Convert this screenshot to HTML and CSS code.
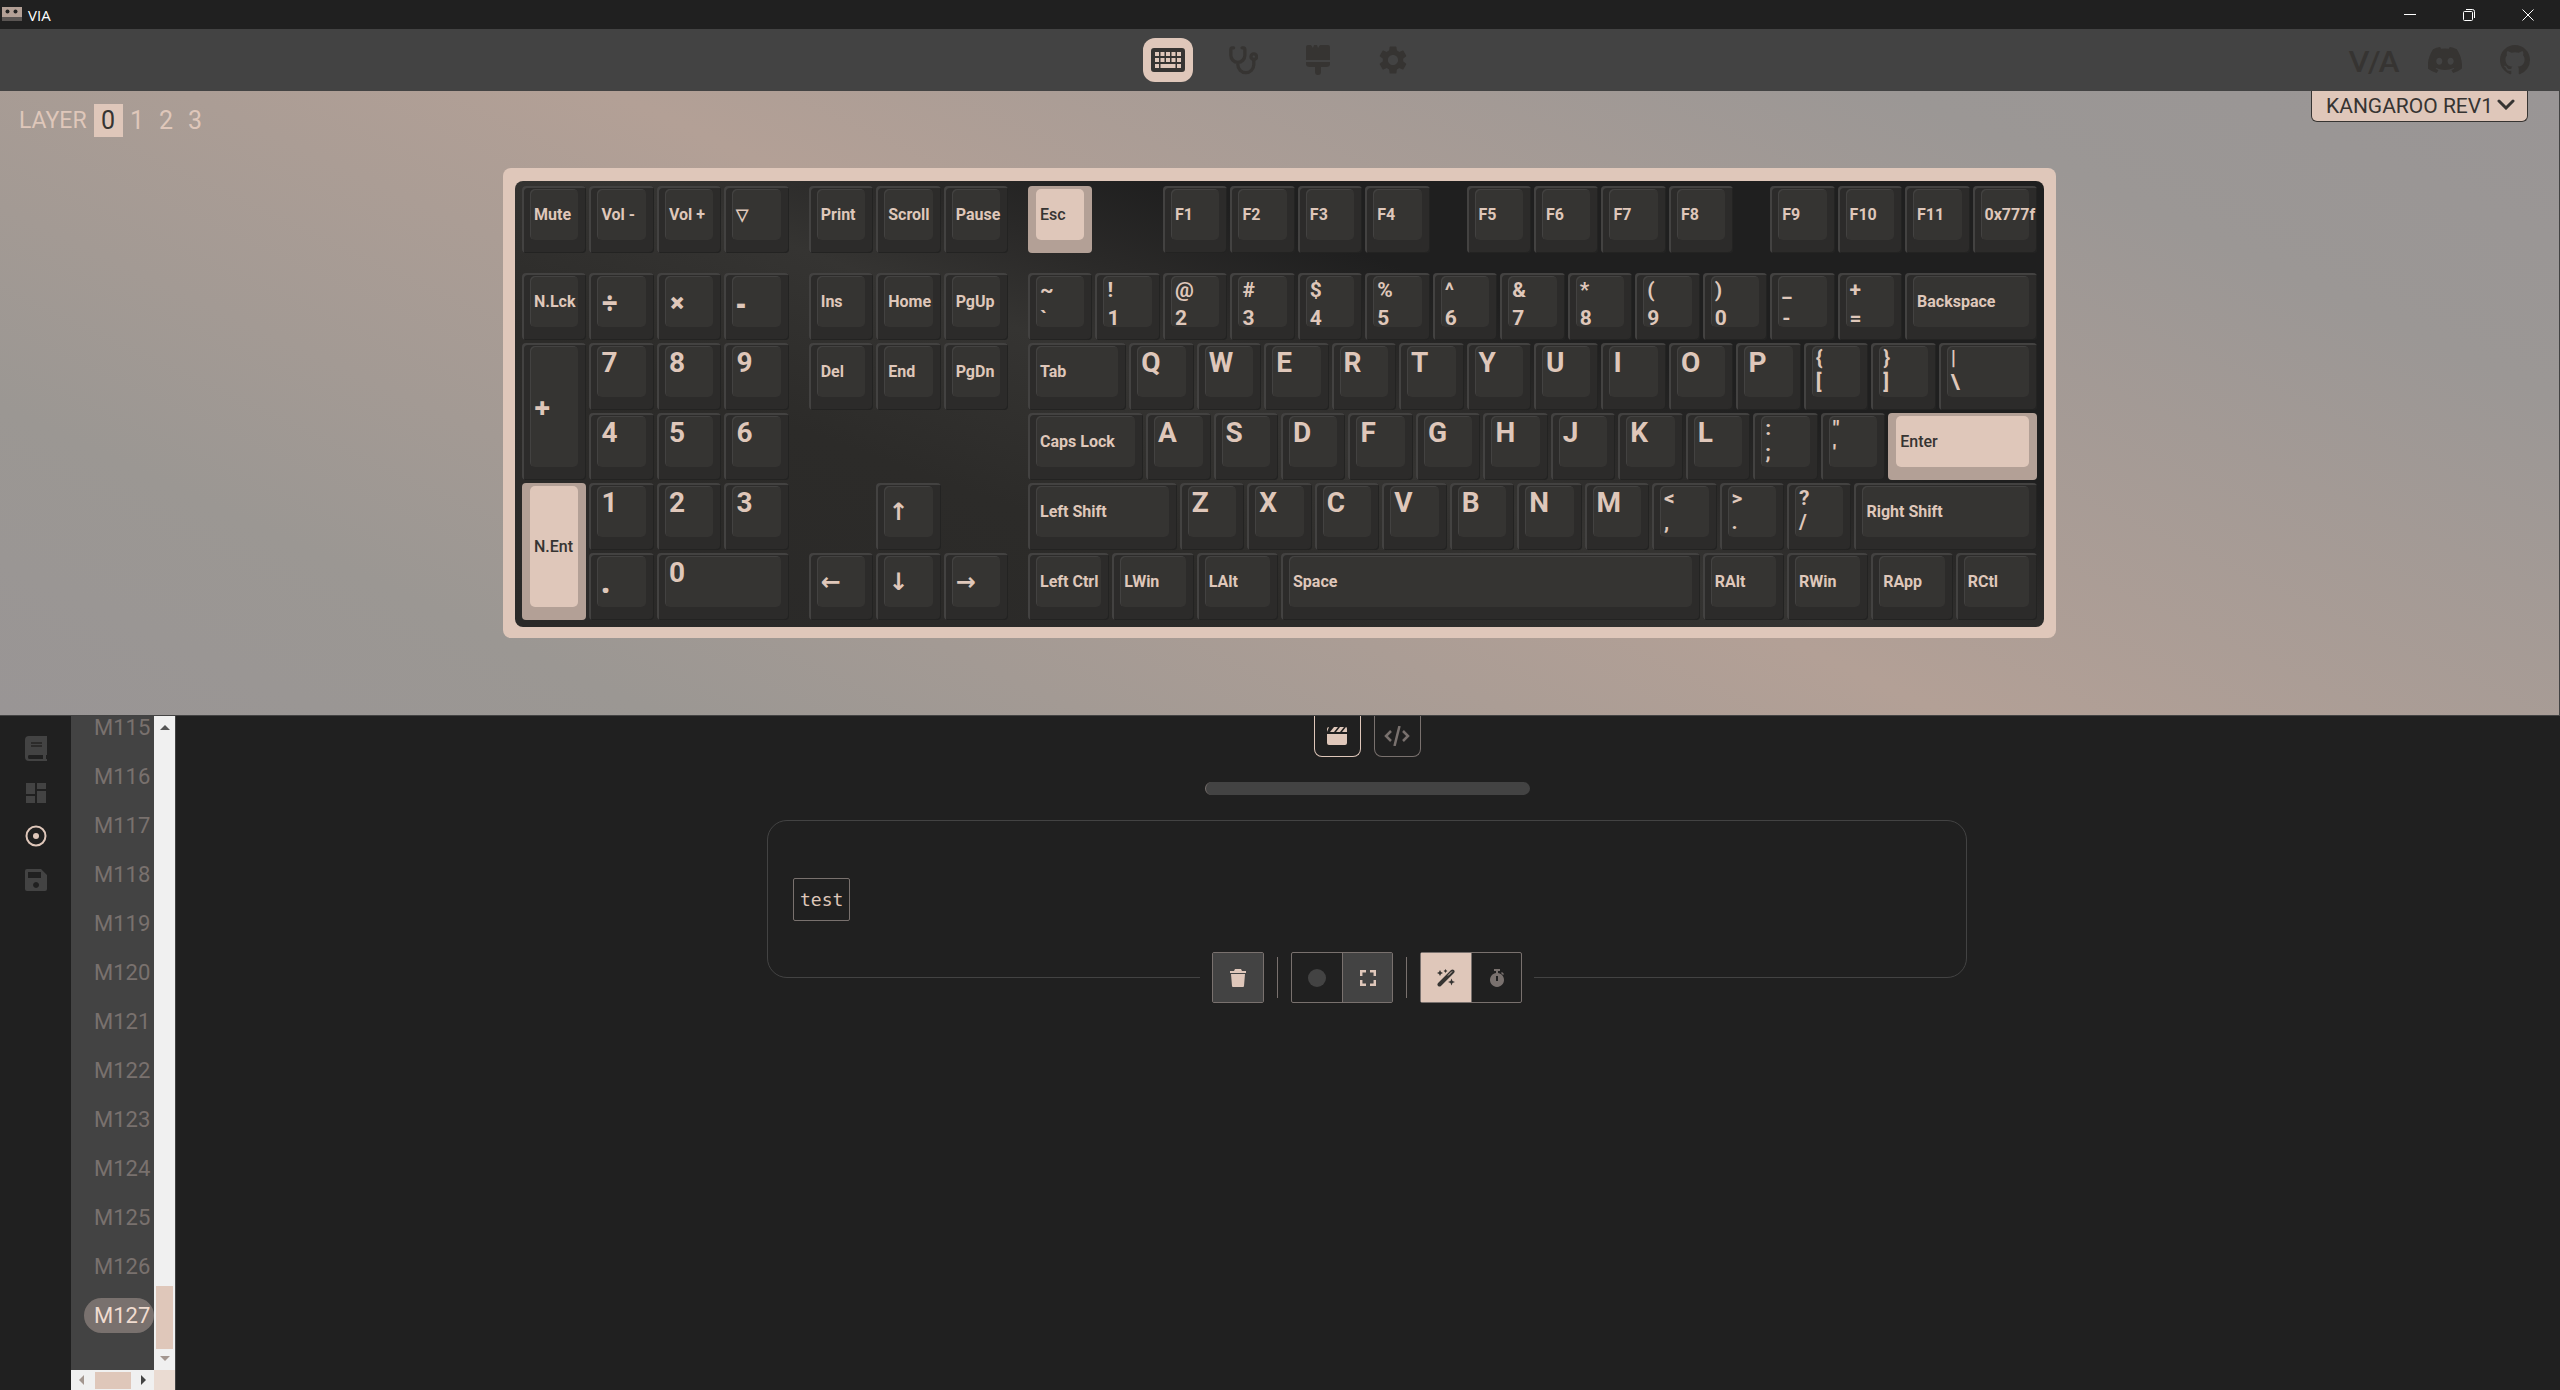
FILE: index.html
```html
<!DOCTYPE html>
<html lang="en">
<head>
	<meta charset="utf-8">
	<title>VIA</title>
	<link rel="stylesheet" href="styles.css">
</head>
<body>
	<header class="titlebar">
		<svg class="appicon" viewBox="0 0 20 14"><path fill="#b3a096" d="M0 0h20v10H0z"/><path fill="#5a5553" d="M0 10h20v4H0z"/><circle cx="5.500" cy="4.500" r="2" fill="#222"/><circle cx="13.500" cy="4.500" r="2" fill="#222"/></svg>
		<span>VIA</span>
		<div class="wincontrols">
			<button aria-label="Minimize"><svg viewBox="0 0 12 12"><path d="M0 5.500h12"/></svg></button>
			<button aria-label="Restore"><svg viewBox="0 0 12 12"><rect x=".5" y="2.500" width="9" height="9" rx="1"/><path d="M3 .5h6.500a2 2 0 0 1 2 2V9"/></svg></button>
			<button aria-label="Close"><svg viewBox="0 0 12 12"><path d="M.5.5l11 11M11.500.5l-11 11"/></svg></button>
		</div>
	</header>

	<nav class="topnav">
		<div class="side"></div>
		<div class="tabs">
			<a href="#" class="active" aria-label="Configure"><svg viewBox="0 0 34 24"><path fill="#363432" fill-rule="evenodd" d="M3 0h28a3 3 0 0 1 3 3v18a3 3 0 0 1-3 3H3a3 3 0 0 1-3-3V3a3 3 0 0 1 3-3zM4 4v4h4V4zm5.500 0v4h4V4zM15 4v4h4V4zm5.500 0v4h4V4zM26 4v4h4V4zM4 10v4h4v-4zm5.500 0v4h4v-4zM15 10v4h4v-4zm5.500 0v4h4v-4zM26 10v4h4v-4zM4 16v4h4v-4zm5.500 0v4h15v-4zM26 16v4h4v-4z"/></svg></a>
			<a href="#" aria-label="Test"><svg viewBox="0 0 32 32"><g fill="none" stroke="#363432" stroke-width="3.500" stroke-linecap="round"><path d="M6 3H4.500Q3 3 3 5v6a7.500 7.500 0 0 0 15 0V5q0-2-1.500-2H15M10.500 19v2a8.500 8.500 0 0 0 17 0v-6"/><circle cx="27.500" cy="12.500" r="3"/></g></svg></a>
			<a href="#" aria-label="Design"><svg viewBox="0 0 24 30"><path fill="#363432" d="M2 0h3l2 3 1-3h3l1 3 2-3h8q2 0 2 2v13H0V2q0-2 2-2zM0 17h24v2q0 3-4 3h-5v5q0 3-3 3t-3-3v-5H4q-4 0-4-3z"/></svg></a>
			<a href="#" aria-label="Settings"><svg class="gear" viewBox="0 0 24 24"><path fill="#363432" d="M19.140 12.940c.04-.3.06-.61.06-.94 0-.32-.02-.64-.07-.94l2.030-1.580c.18-.14.23-.41.12-.61l-1.920-3.320c-.12-.22-.37-.29-.59-.22l-2.390.96c-.5-.38-1.030-.7-1.620-.94l-.36-2.540c-.04-.24-.24-.41-.48-.41h-3.840c-.24 0-.43.17-.47.41l-.36 2.540c-.59.24-1.130.57-1.620.94l-2.390-.96c-.22-.08-.47 0-.59.22L2.740 8.870c-.12.21-.08.47.12.61l2.030 1.580c-.05.3-.09.63-.09.94s.02.64.07.94l-2.030 1.580c-.18.14-.23.41-.12.61l1.920 3.320c.12.22.37.29.59.22l2.390-.96c.5.38 1.030.7 1.620.94l.36 2.540c.05.24.24.41.48.41h3.840c.24 0 .44-.17.47-.41l.36-2.540c.59-.24 1.130-.56 1.620-.94l2.390.96c.22.08.47 0 .59-.22l1.920-3.320c.12-.22.07-.47-.12-.61l-2.010-1.580zM12 15.600c-1.980 0-3.600-1.620-3.600-3.600s1.620-3.600 3.600-3.600 3.600 1.620 3.600 3.600-1.620 3.600-3.600 3.600z"/></svg></a>
		</div>
		<div class="side links">
			<a href="#" class="logo">V/A</a>
			<a href="#" aria-label="Discord"><svg viewBox="28 32 584 448"><path fill="#363432" d="M524.531 69.836a1.500 1.500 0 0 0-.764-.7A485.065 485.065 0 0 0 404.081 32.030a1.816 1.816 0 0 0-1.923.91 337.461 337.461 0 0 0-14.900 30.600 447.848 447.848 0 0 0-134.426 0 309.541 309.541 0 0 0-15.135-30.600 1.890 1.890 0 0 0-1.924-.91A483.689 483.689 0 0 0 116.085 69.137a1.712 1.712 0 0 0-.788.676C39.068 183.651 18.186 294.690 28.430 404.354a2.016 2.016 0 0 0 .765 1.375A487.666 487.666 0 0 0 176.020 479.918a1.900 1.900 0 0 0 2.063-.676A348.200 348.200 0 0 0 208.120 430.400a1.860 1.860 0 0 0-1.019-2.588 321.173 321.173 0 0 1-45.868-21.853 1.885 1.885 0 0 1-.185-3.126c3.082-2.309 6.166-4.711 9.109-7.137a1.819 1.819 0 0 1 1.900-.256c96.229 43.917 200.410 43.917 295.500 0a1.812 1.812 0 0 1 1.924.233c2.944 2.426 6.027 4.851 9.132 7.160a1.884 1.884 0 0 1-.162 3.126 301.407 301.407 0 0 1-45.890 21.830 1.875 1.875 0 0 0-1 2.611 391.055 391.055 0 0 0 30.014 48.815 1.864 1.864 0 0 0 2.063.7A486.048 486.048 0 0 0 610.700 405.729a1.882 1.882 0 0 0 .765-1.352C623.729 277.594 590.933 167.465 524.531 69.836ZM222.491 337.580c-28.972 0-52.844-26.587-52.844-59.239S193.056 219.100 222.491 219.100c29.665 0 53.306 26.820 52.843 59.239C275.334 310.993 251.924 337.580 222.491 337.580Zm195.380 0c-28.971 0-52.843-26.587-52.843-59.239S388.437 219.100 417.871 219.100c29.667 0 53.307 26.820 52.844 59.239C470.715 310.993 447.538 337.580 417.871 337.580Z"/></svg></a>
			<a href="#" aria-label="GitHub"><svg class="github" viewBox="0 0 16 16"><path fill="#363432" d="M8 0C3.580 0 0 3.580 0 8c0 3.540 2.290 6.530 5.470 7.590.4.07.55-.17.55-.38 0-.19-.01-.82-.01-1.490-2.010.37-2.530-.49-2.690-.94-.09-.23-.48-.94-.82-1.130-.28-.15-.68-.52-.01-.53.63-.01 1.080.58 1.230.82.72 1.210 1.870.87 2.330.66.07-.52.28-.87.51-1.070-1.780-.2-3.640-.89-3.640-3.950 0-.87.31-1.590.82-2.150-.08-.2-.36-1.020.08-2.120 0 0 .67-.21 2.200.82.64-.18 1.320-.27 2-.27s1.360.09 2 .27c1.530-1.040 2.200-.82 2.200-.82.44 1.100.16 1.920.08 2.120.51.56.82 1.270.82 2.150 0 3.070-1.870 3.750-3.650 3.950.29.25.54.73.54 1.480 0 1.070-.01 1.930-.01 2.200 0 .21.15.46.55.38A8.010 8.010 0 0 0 16 8c0-4.420-3.580-8-8-8z"/></svg></a>
		</div>
	</nav>

	<section class="canvas">
		<div class="canvastop">
			<div class="layers">
				<span>LAYER</span>
				<button class="active">0</button>
				<button>1</button>
				<button>2</button>
				<button>3</button>
			</div>
			<div class="device">
				<select aria-label="Keyboard">
					<option>KANGAROO REV1</option>
				</select>
				<svg viewBox="0 0 18 11"><path d="M2 2l7 7 7-7" fill="none" stroke="#363432" stroke-width="3" stroke-linecap="round"/></svg>
			</div>
		</div>
		<div class="case">
			<div class="plate" id="keys"></div>
		</div>
	</section>

	<main class="pane">
		<nav class="rail">
			<a href="#" aria-label="Keymap"><svg viewBox="0 0 22 25"><path fill="#434343" fill-rule="evenodd" d="M4 0h18v19h-1v4h1v2H4q-4 0-4-4V4q0-4 4-4zM4 19q-1 0-1 2t1 2h14v-4z"/><path stroke="#2c2b2a" stroke-width="2" d="M6 7h11M6 10h11"/></svg></a>
			<a href="#" aria-label="Layouts"><svg class="small" viewBox="0 0 20 20"><path fill="#434343" d="M0 0h9v11H0zM11 0h9v6h-9zM11 8h9v12h-9zM0 13h9v7H0z"/></svg></a>
			<a href="#" aria-label="Macros"><svg viewBox="0 0 22 22"><circle cx="11" cy="11" r="9.500" fill="none" stroke="#dfc7ba" stroke-width="2"/><circle cx="11" cy="11" r="3" fill="#dfc7ba"/></svg></a>
			<a href="#" aria-label="Save and load"><svg viewBox="0 0 22 22"><path fill="#434343" fill-rule="evenodd" d="M2 0h14l6 6v14q0 2-2 2H2q-2 0-2-2V2q0-2 2-2zM3 3v6h13V3zM11 13a3 3 0 1 0 .1 0z"/></svg></a>
		</nav>
		<div class="macros">
			<div class="list" id="macros"></div>
			<div class="vscroll">
				<svg viewBox="0 0 10 5"><path fill="#555" d="M5 0l5 5H0z"/></svg>
				<div class="vthumb"></div>
				<svg viewBox="0 0 10 5"><path fill="#a3968f" d="M5 5l5-5H0z"/></svg>
			</div>
			<div class="hscroll">
				<svg viewBox="0 0 5 10"><path fill="#a3968f" d="M0 5l5-5v10z"/></svg>
				<div class="hthumb"></div>
				<svg viewBox="0 0 5 10"><path fill="#444" d="M5 5L0 0v10z"/></svg>
			</div>
			<div class="corner"></div>
		</div>
		<div class="editor">
			<div class="modes">
				<button class="active" aria-label="Record"><svg viewBox="0 0 20 18"><path fill="#dfc7ba" d="M0 7h20v9q0 2-2 2H2q-2 0-2-2zM0 5V2q0-2 2-2zM3 5l4-5h4L7 5zM9 5l4-5h4l-4 5zM15 5l4-5q1 0 1 2v3z"/></svg></button>
				<button aria-label="Script"><svg class="code" viewBox="0 0 26 20"><path fill="none" stroke="#79716e" stroke-width="2.500" d="M7 5l-5 5 5 5M19 5l5 5-5 5M15.500 0l-5 20"/></svg></button>
			</div>
			<div class="progress"></div>
			<div class="sequence">
				<span class="chip">test</span>
			</div>
			<div class="tools">
				<div class="group">
					<button class="on" aria-label="Delete macro"><svg viewBox="0 0 16 18"><path fill="#dfc7ba" d="M0 2h4l1-2h6l1 2h4v2H0zM1 5h14l-1 12q0 1-1 1H3q-1 0-1-1z"/></svg></button>
				</div>
				<i class="sep"></i>
				<div class="group">
					<button aria-label="Record"><svg viewBox="0 0 18 18"><circle cx="9" cy="9" r="9" fill="#434343"/></svg></button>
					<button class="on" aria-label="Fullscreen"><svg class="full" viewBox="0 0 16 16"><path fill="none" stroke="#dfc7ba" stroke-width="2.500" d="M1.200 6V1.200H6M10 1.200h4.800V6M14.800 10v4.800H10M6 14.800H1.200V10"/></svg></button>
				</div>
				<i class="sep"></i>
				<div class="group">
					<button class="picked" aria-label="Smart optimize"><svg viewBox="0 0 18 18"><path stroke="#363432" stroke-width="4" stroke-linecap="round" d="M2.500 15.500l13-13"/><path stroke="#dfc7ba" d="M11 6.500l4-4"/><path fill="#363432" d="M3 1l1 2 2 1-2 1-1 2-1-2-2-1 2-1zM8.500 0l.7 1.300 1.300.7-1.300.7L8.500 4l-.7-1.300L6.500 2l1.300-.7zM14.500 9.500l1 2.500 2.500 1-2.500 1-1 2.500-1-2.500-2.500-1 2.500-1z"/></svg></button>
					<button aria-label="Record delays"><svg viewBox="0 0 16 18"><path fill="#79716e" fill-rule="evenodd" d="M5 0h6v2H9v2a7 7 0 1 1-2 0V2H5zM7 7v5h2V7zM13 3l2 2-1 1-2-2z"/></svg></button>
				</div>
			</div>
		</div>
	</main>

	<script src="script.js"></script>
</body>
</html>
```

FILE: styles.css
```css
*{
	box-sizing: border-box;
}
body{
	background-color: #202020;
	color: #dfc7ba;
	display: flex;
	flex-direction: column;
	font-family: Roboto, sans-serif;
	height: 100vh;
	margin: 0;
	overflow: hidden;
}
button,
select{
	background: none;
	border: none;
	color: inherit;
	font-family: inherit;
	margin: 0;
	padding: 0;
}
svg{
	display: block;
}

/* window title */
.titlebar{
	align-items: center;
	color: #fff;
	display: flex;
	flex: none;
	font-family: "Open Sans", sans-serif;
	font-size: 15px;
	gap: 6px;
	height: 29px;
	padding: 0 3px 0 2px;
}
.appicon{
	height: 14px;
	margin-bottom: 2px;
	width: 20px;
}
.wincontrols{
	display: flex;
	margin-left: auto;
}
.wincontrols button{
	display: flex;
	justify-content: center;
	width: 59px;
}
.wincontrols svg{
	fill: none;
	height: 12px;
	stroke: #fff;
	width: 12px;
}

/* top navigation */
.topnav{
	align-items: center;
	background-color: #434343;
	display: flex;
	flex: none;
	height: 62px;
}
.side{
	flex: 1;
	padding: 0 30px;
}
.tabs{
	display: flex;
	gap: 25px;
}
.tabs a{
	align-items: center;
	border-radius: 12px;
	display: flex;
	height: 44px;
	justify-content: center;
	width: 50px;
}
.tabs a.active{
	background-color: #dfc7ba;
}
.tabs svg{
	height: 30px;
}
.tabs .active svg{
	height: 24px;
}
.tabs .gear{
	height: 34px;
}
.links{
	align-items: center;
	display: flex;
	gap: 29px;
	justify-content: flex-end;
}
.links svg{
	height: 26px;
}
.links .github{
	height: 30px;
	margin-left: 9px;
}
.logo{
	color: #363432;
	font-family: Lato, sans-serif;
	font-size: 29px;
	font-weight: bold;
	text-decoration: none;
}

/* keyboard canvas */
.canvas{
	background: linear-gradient(25deg, #999595 0%, #9b9793 17%, #b3a096 50%, #9b9795 83%, #999595 100%);
	border-bottom: 1px solid #434343;
	border-right: 1px solid #434343;
	flex: none;
	padding-bottom: 77px;
}
.canvastop{
	align-items: flex-start;
	display: flex;
	height: 77px;
	justify-content: space-between;
	padding: 0 31px 0 19px;
}
.layers{
	align-items: center;
	display: flex;
	font-size: 23px;
	margin-top: 13px;
}
.layers span{
	margin-right: 7px;
}
.layers button{
	font-size: 25px;
	height: 33px;
	width: 29px;
}
.layers .active{
	background-color: #dfc7ba;
	color: #363432;
}
.device{
	position: relative;
}
.device select{
	-webkit-appearance: none;
	background-color: #dfc7ba;
	border: 1px solid #363432;
	border-radius: 0 0 6px 6px;
	border-top: none;
	color: #363432;
	font-size: 21px;
	height: 31px;
	padding-left: 14px;
	width: 217px;
}
.device svg{
	height: 11px;
	pointer-events: none;
	position: absolute;
	right: 13px;
	top: 8px;
	width: 18px;
}
.case{
	background-color: #dfc7ba;
	border-radius: 8px;
	margin: 0 auto;
	max-width: 1553px;
	padding: 13px 12px 11px;
	width: 94%;
}
.plate{
	background: linear-gradient(20deg, #2a2928 0%, #2c2b29 30%, #353432 48%, #2a2928 58%, #1f1f1f 68%);
	border-radius: 8px;
	display: grid;
	grid-template-columns: repeat(90, 1fr);
	grid-template-rows: 70px 17px repeat(5, 70px);
	padding: 5px 4px 4px 7px;
}
.key{
	background-color: #2c2b2a;
	border-radius: 4px;
	box-shadow: inset 2px 2px 0 #434241, inset -1px -1px 0 #232322;
	color: #dfc7ba;
	display: flex;
	margin: 0 3px 3px 0;
	min-width: 0;
	padding: 3px 8px 13px;
}
.cap{
	background-color: #353432;
	border-radius: 5px;
	box-shadow: inset 1px 1px 0 #434241;
	display: flex;
	flex: 1;
	flex-direction: column;
	font-size: 16px;
	font-weight: bold;
	height: 100%;
	justify-content: center;
	line-height: 22px;
	min-width: 0;
	padding-left: 4px;
	text-align: left;
	white-space: nowrap;
}
.accent{
	background-color: #b3a096;
	box-shadow: none;
	color: #363432;
}
.accent .cap{
	background-color: #dfc7ba;
	box-shadow: none;
	font-weight: 500;
}
.alpha .cap{
	font-size: 28px;
	justify-content: flex-start;
	line-height: 34px;
}
.pad .cap{
	font-family: "Open Sans", sans-serif;
	font-size: 28px;
	font-weight: 800;
}
.arrow .cap{
	font-family: "DejaVu Sans", sans-serif;
	font-size: 24px;
}
.double .cap{
	font-size: 21px;
	justify-content: flex-start;
	line-height: 28px;
}
.punct .cap{
	font-size: 21px;
	justify-content: flex-start;
	line-height: 24px;
}

/* bottom pane */
.pane{
	display: flex;
	flex: 1;
	min-height: 0;
}
.rail{
	align-items: center;
	display: flex;
	flex-direction: column;
	gap: 22px;
	padding-top: 20px;
	width: 71px;
}
.rail svg{
	width: 22px;
}
.rail .small{
	width: 20px;
}
.macros{
	background-color: #434343;
	border-right: 1px solid #434343;
	display: grid;
	grid-template-columns: 83px 21px;
	grid-template-rows: 1fr 20px;
	min-height: 0;
}
.list{
	display: flex;
	flex-direction: column;
	gap: 14px;
	justify-content: flex-end;
	min-height: 0;
	overflow: hidden;
	padding: 0 0 37px 13px;
}
.list button{
	border-radius: 18px;
	color: #79716e;
	flex: none;
	font-size: 22px;
	height: 35px;
	padding-left: 10px;
	text-align: left;
	width: 70px;
}
.list .active{
	background-color: #79716e;
	color: #f0dcd0;
}
.vscroll,
.hscroll{
	align-items: center;
	background-color: #f0f0f0;
	display: flex;
}
.vscroll{
	flex-direction: column;
	padding: 9px 0;
}
.vscroll svg{
	width: 10px;
}
.vthumb{
	background-color: #dfc7ba;
	height: 63px;
	margin: auto 0 7px;
	width: 17px;
}
.hscroll{
	justify-content: space-between;
	padding: 0 8px;
}
.hscroll svg{
	height: 10px;
}
.hthumb{
	background-color: #dfc7ba;
	height: 17px;
	width: 36px;
}
.corner{
	background-color: #eadbd2;
}

/* macro editor */
.editor{
	align-items: center;
	display: flex;
	flex: 1;
	flex-direction: column;
	padding-right: 2px;
}
.modes{
	display: flex;
	gap: 13px;
}
.modes button{
	align-items: center;
	border: 1px solid #79716e;
	border-radius: 0 0 8px 8px;
	border-top: none;
	display: flex;
	height: 41px;
	justify-content: center;
	width: 47px;
}
.modes .active{
	border-color: #dfc7ba;
}
.modes svg{
	height: 18px;
}
.modes .code{
	height: 20px;
}
.progress{
	background-color: #434343;
	border-left: 1px solid #79716e;
	border-radius: 7px;
	height: 13px;
	margin: 25px 0;
	width: 325px;
}
.sequence{
	align-items: center;
	border: 1px solid #434343;
	border-radius: 20px;
	display: flex;
	height: 158px;
	max-width: 1200px;
	padding: 0 25px;
	width: 94%;
}
.chip{
	border: 1px solid #79716e;
	border-radius: 2px;
	font-family: "DejaVu Sans Mono", monospace;
	font-size: 18px;
	line-height: 41px;
	padding: 0 6px;
}
.tools{
	align-items: center;
	background-color: #202020;
	display: flex;
	gap: 13px;
	margin-top: -26px;
	padding: 0 12px;
}
.group{
	border: 1px solid #79716e;
	border-radius: 2px;
	display: flex;
}
.group button{
	align-items: center;
	display: flex;
	height: 49px;
	justify-content: center;
	width: 50px;
}
.group button + button{
	border-left: 1px solid #79716e;
}
.group svg{
	height: 18px;
}
.group .full{
	height: 16px;
}
.group .on{
	background-color: #434343;
}
.group .picked{
	background-color: #dfc7ba;
}
.sep{
	background-color: #79716e;
	height: 41px;
	width: 1px;
}
```

FILE: script.js
```js
// every key: label, grid row, x in key units, width, style, height in rows
// "\n" in a label splits the shifted and the plain legend
var keys = [
	['Mute', 1, 0], ['Vol -', 1, 1], ['Vol +', 1, 2], ['▽', 1, 3],
	['Print', 1, 4.25], ['Scroll', 1, 5.25], ['Pause', 1, 6.25],
	['Esc', 1, 7.5, 1, 'accent'],
	['F1', 1, 9.5], ['F2', 1, 10.5], ['F3', 1, 11.5], ['F4', 1, 12.5],
	['F5', 1, 14], ['F6', 1, 15], ['F7', 1, 16], ['F8', 1, 17],
	['F9', 1, 18.5], ['F10', 1, 19.5], ['F11', 1, 20.5], ['0x777f', 1, 21.5],

	['N.Lck', 3, 0], ['÷', 3, 1, 1, 'pad'], ['×', 3, 2, 1, 'pad'], ['-', 3, 3, 1, 'pad'],
	['Ins', 3, 4.25], ['Home', 3, 5.25], ['PgUp', 3, 6.25],
	['Backspace', 3, 20.5, 2],

	['+', 4, 0, 1, 'pad', 2],
	['Del', 4, 4.25], ['End', 4, 5.25], ['PgDn', 4, 6.25],
	['Tab', 4, 7.5, 1.5],
	['{\n[', 4, 19, 1, 'punct'], ['}\n]', 4, 20, 1, 'punct'], ['|\n\\', 4, 21, 1.5, 'punct'],

	['Caps Lock', 5, 7.5, 1.75],
	[':\n;', 5, 18.25, 1, 'punct'], ['"\n\'', 5, 19.25, 1, 'punct'],
	['Enter', 5, 20.25, 2.25, 'accent'],

	['N.Ent', 6, 0, 1, 'accent', 2],
	['↑', 6, 5.25, 1, 'arrow'],
	['Left Shift', 6, 7.5, 2.25],
	['<\n,', 6, 16.75, 1, 'punct'], ['>\n.', 6, 17.75, 1, 'punct'], ['?\n/', 6, 18.75, 1, 'punct'],
	['Right Shift', 6, 19.75, 2.75],

	['.', 7, 1, 1, 'pad'], ['0', 7, 2, 2, 'alpha'],
	['←', 7, 4.25, 1, 'arrow'], ['↓', 7, 5.25, 1, 'arrow'], ['→', 7, 6.25, 1, 'arrow'],
	['Left Ctrl', 7, 7.5, 1.25], ['LWin', 7, 8.75, 1.25], ['LAlt', 7, 10, 1.25],
	['Space', 7, 11.25, 6.25],
	['RAlt', 7, 17.5, 1.25], ['RWin', 7, 18.75, 1.25], ['RApp', 7, 20, 1.25], ['RCtl', 7, 21.25, 1.25]
];

function addRun(legends, row, x, style){
	for (var i = 0; i < legends.length; i++) {
		keys.push([legends[i], row, x + i, 1, style]);
	}
}
addRun(['~\n`', '!\n1', '@\n2', '#\n3', '$\n4', '%\n5', '^\n6', '&\n7', '*\n8', '(\n9', ')\n0', '_\n-', '+\n='], 3, 7.5, 'double');
addRun('789'.split(''), 4, 1, 'alpha');
addRun('456'.split(''), 5, 1, 'alpha');
addRun('123'.split(''), 6, 1, 'alpha');
addRun('QWERTYUIOP'.split(''), 4, 9, 'alpha');
addRun('ASDFGHJKL'.split(''), 5, 9.25, 'alpha');
addRun('ZXCVBNM'.split(''), 6, 9.75, 'alpha');

var plate = document.getElementById('keys');
keys.forEach(function(k){
	var key = document.createElement('button');
	var cap = document.createElement('span');
	key.className = 'key ' + (k[4] || '');
	key.style.gridColumn = (k[2] * 4 + 1) + ' / span ' + (k[3] || 1) * 4;
	key.style.gridRow = k[1] + ' / span ' + (k[5] || 1);
	cap.className = 'cap';
	k[0].split('\n').forEach(function(text){
		var legend = document.createElement('span');
		legend.textContent = text;
		cap.appendChild(legend);
	});
	key.appendChild(cap);
	plate.appendChild(key);
});

var macros = document.getElementById('macros');
for (var i = 115; i <= 127; i++) {
	var item = document.createElement('button');
	item.textContent = 'M' + i;
	if (i == 127) {
		item.className = 'active';
	}
	macros.appendChild(item);
}
```
